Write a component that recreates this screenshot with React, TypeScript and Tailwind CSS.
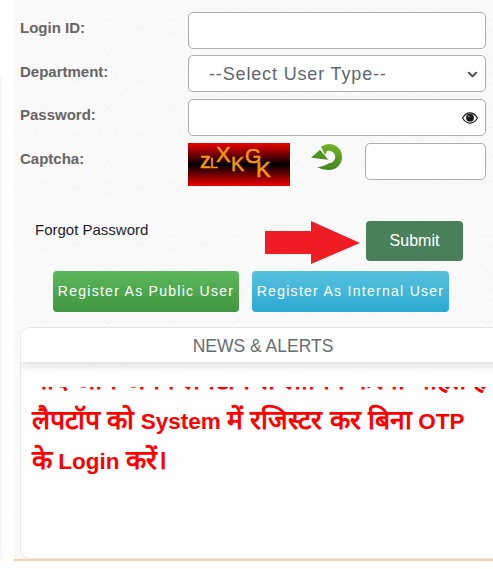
import { ChevronDown } from 'lucide-react';

function HeartPattern() {
    return (
        <svg className="absolute inset-0 w-full h-full pointer-events-none" aria-hidden="true">
            <defs>
                <pattern id="hearts" width="63" height="54" patternUnits="userSpaceOnUse">
                    <path d="M31 22c-3-5-10-3-9 2 1 4 6 6 9 9 3-3 8-5 9-9 1-5-6-7-9-2z" fill="none" stroke="#f2f2f2" strokeWidth="1" />
                    <path d="M0 27C12 22 20 10 31 0c11 10 19 22 32 27C50 32 42 44 31 54 20 44 12 32 0 27z" fill="none" stroke="#f3f3f3" strokeWidth="1" />
                </pattern>
            </defs>
            <rect width="100%" height="100%" fill="url(#hearts)" />
        </svg>
    );
}

function EyeIcon() {
    return (
        <svg width="16" height="12" viewBox="0 0 16 12">
            <path d="M0.5 6C3 2 5.5 0.8 8 0.8S13 2 15.5 6C13 10 10.5 11.2 8 11.2S3 10 0.5 6z" fill="#fff" stroke="#1a1a1a" strokeWidth="1.2" />
            <circle cx="8" cy="5.7" r="3.9" fill="#1a1a1a" />
            <circle cx="6.8" cy="4.4" r="0.9" fill="#8a8a8a" />
        </svg>
    );
}

function RefreshIcon() {
    return (
        <svg width="32" height="28" viewBox="0 0 32 28">
            <defs>
                <linearGradient id="refreshGreen" x1="0" y1="0" x2="0" y2="1">
                    <stop offset="0" stopColor="#74b32b" />
                    <stop offset="1" stopColor="#47861e" />
                </linearGradient>
            </defs>
            <path d="M10 3.8A13 13 0 0 1 31 14A13 13 0 0 1 18 27C13.5 27 9.5 26 6 24C10 24 14 22.5 18 20.3A6.3 6.3 0 1 0 16 8L14 12z" fill="url(#refreshGreen)" />
            <path d="M0 14.7L9 6.7L17.3 16.7z" fill="#4f9421" />
        </svg>
    );
}

function Captcha() {
    return (
        <div className="relative w-[102px] h-[43px] bg-[linear-gradient(to_bottom,#f00000_0%,#000000_50%,#f00000_100%)] font-['Liberation_Sans',sans-serif] text-[#f59a0c] [-webkit-text-stroke:0.5px_#f59a0c] overflow-hidden">
            <span className="absolute left-[12px] top-[7px] text-[22px] leading-[22px]">z</span>
            <span className="absolute left-[22px] top-[13px] text-[14px] leading-[14px]">L</span>
            <span className="absolute left-[28px] top-[0px] text-[22px] leading-[24px]">X</span>
            <span className="absolute left-[43px] top-[11px] text-[20px] leading-[20px]">K</span>
            <span className="absolute left-[57px] top-[2px] text-[21px] leading-[22px]">G</span>
            <span className="absolute left-[68px] top-[15px] text-[22px] leading-[23px]">K</span>
        </div>
    );
}

function FormRow({ label, children, rowClass }: { label: string; children: React.ReactNode; rowClass: string }) {
    return (
        <div className={`flex ${rowClass}`}>
            <label className="w-[174px] pl-[6px] text-[15px] leading-[20px] font-bold text-[#666666]">{label}</label>
            {children}
        </div>
    );
}

function Hi({ children }: { children: React.ReactNode }) {
    return <span className="text-[26.5px] leading-none">{children}</span>;
}

export default function App() {
    return (
        <div className="w-[493px] h-[569px] bg-white overflow-hidden flex font-['Liberation_Sans',sans-serif]">
            {/* faint strip on the left edge */}
            <div className="w-[2px] h-[486px] mt-[75px] bg-[#fdf4f5] shrink-0" />
            <div className="relative ml-[12px] w-[479px] h-[561px] shrink-0 bg-[#f9f9f9] border-b-2 border-[#f6cda6] overflow-hidden">
                <HeartPattern />
                <div className="relative pt-[12px] h-[559px] flex flex-col">
                    <FormRow label="Login ID:" rowClass="h-[43px] pt-[6px]">
                        <input className="w-[298px] h-[37px] -mt-[6px] bg-white border border-[#adadad] rounded-[5px]" />
                    </FormRow>
                    <FormRow label="Department:" rowClass="h-[44px] pt-[7px]">
                        <div className="w-[298px] h-[37px] -mt-[7px] pt-[2px] bg-white border border-[#adadad] rounded-[5px] flex items-center justify-between pl-[20px] pr-[5px]">
                            <span className="text-[18px] tracking-[0.85px] text-[#5f6670]">--Select User Type--</span>
                            <ChevronDown size={15} strokeWidth={3} className="text-[#444]" />
                        </div>
                    </FormRow>
                    <FormRow label="Password:" rowClass="h-[44px] pt-[6px]">
                        <div className="w-[298px] h-[37px] -mt-[6px] bg-white border border-[#adadad] rounded-[5px] flex items-center justify-end pr-[7px]">
                            <EyeIcon />
                        </div>
                    </FormRow>
                    <FormRow label="Captcha:" rowClass="h-[78px] pt-[6px]">
                        <div className="-mt-[6px] flex items-start">
                            <Captcha />
                            <div className="ml-[21px]"><RefreshIcon /></div>
                            <input className="ml-[22px] w-[121px] h-[37px] bg-white border border-[#adadad] rounded-[5px]" />
                        </div>
                    </FormRow>
                    <div className="flex items-start h-[50px]">
                        <span className="ml-[21px] w-[230px] text-[15px] leading-[18px] text-[#1c2230]">Forgot Password</span>
                        <svg width="96" height="44" viewBox="0 0 96 44" className="shrink-0">
                            <path d="M0 10H46V0L95 22L46 43V33H0z" fill="#ee1c25" />
                        </svg>
                        <button className="ml-[5px] w-[97px] h-[40px] bg-[#4a7f5b] rounded-[4px] text-white text-[16px]">Submit</button>
                    </div>
                    <div className="flex ml-[39px] gap-[13px]">
                        <button className="w-[186px] h-[41px] rounded-[4px] bg-[linear-gradient(to_bottom,#5cb85c,#419641)] text-white text-[14px] tracking-[1.28px] whitespace-nowrap">Register As Public User</button>
                        <button className="w-[197px] h-[41px] rounded-[4px] bg-[linear-gradient(to_bottom,#5bc0de,#2aabd2)] text-white text-[14px] tracking-[1.28px] whitespace-nowrap">Register As Internal User</button>
                    </div>
                    <div className="ml-[6px] mt-[15px] w-[486px] flex-1 border border-[#e8e8e8] rounded-l-[10px] bg-white/70 min-h-0 flex flex-col overflow-hidden">
                        <div className="h-[34px] shrink-0 bg-white shadow-[0_4px_8px_rgba(0,0,0,0.12)] text-center text-[#666c75] text-[17.5px] leading-[36px]">NEWS &amp; ALERTS</div>
                        <div className="mt-[25px] flex-1 overflow-hidden px-[11px] text-[22.5px] leading-[40px] font-bold text-[#ff0000] whitespace-nowrap">
                            <p className="-mt-[25px]">
                                <span className="block"><Hi>यदि आप अपने लैपटॉप से लॉगिन करना चाहते हैं तो</Hi></span>
                                <span className="block"><Hi>लैपटॉप को</Hi> System <Hi>में रजिस्टर कर बिना</Hi> OTP</span>
                                <span className="block"><Hi>के</Hi> Login <Hi>करें।</Hi></span>
                            </p>
                        </div>
                    </div>
                </div>
            </div>
        </div>
    );
}
